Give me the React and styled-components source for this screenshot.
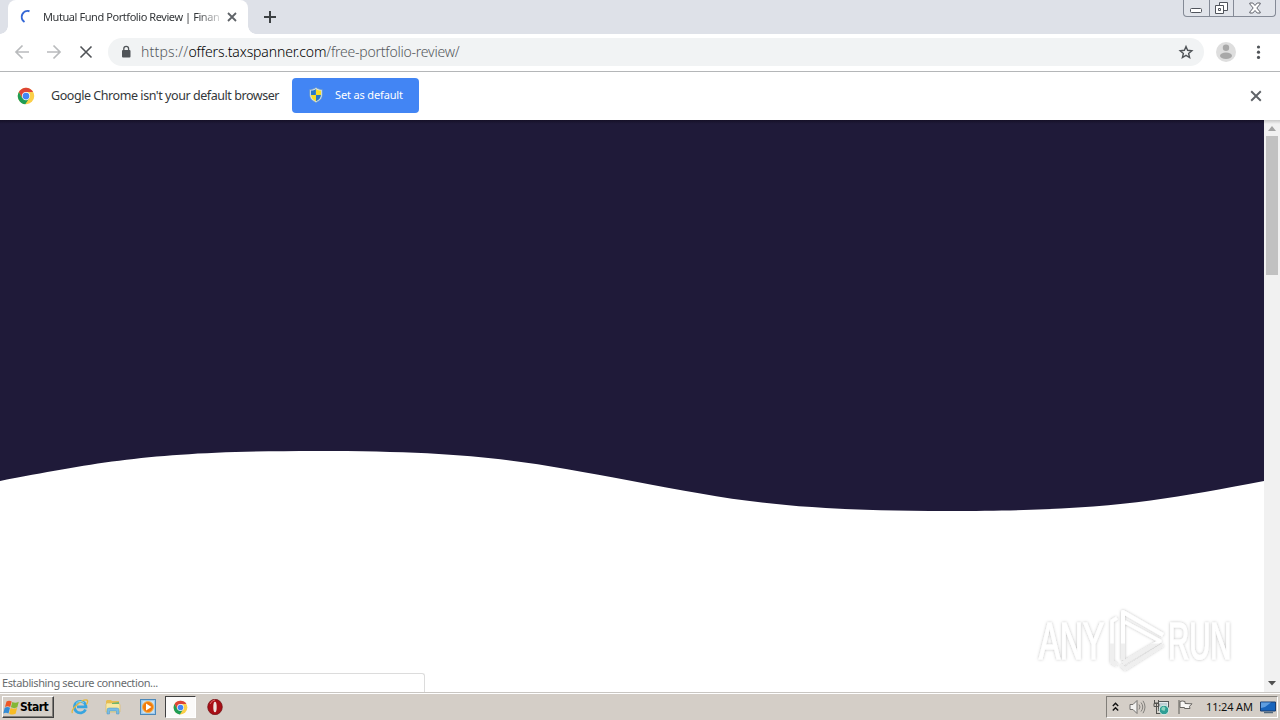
import React from 'react';
import styled, { createGlobalStyle } from 'styled-components';

const Global = createGlobalStyle`
  * { box-sizing: border-box; }
  html, body { margin: 0; padding: 0; overflow: hidden; }
  svg { display: block; flex: none; }
`;

const Desktop = styled.div`
  width: 1280px;
  height: 720px;
  display: flex;
  flex-direction: column;
  background: #fff;
  overflow: hidden;
  font-family: 'Noto Sans', 'DejaVu Sans', sans-serif;
`;

const Label = styled.span`
  display: block;
  flex: none;
  white-space: nowrap;
  font-family: ${(p) => p.$family || "'Noto Sans', sans-serif"};
  font-size: ${(p) => p.$size}px;
  font-weight: ${(p) => p.$weight || 400};
  letter-spacing: ${(p) => p.$track || 0}px;
  line-height: 16px;
  color: ${(p) => p.$color};
`;

const TabStrip = styled.header`
  height: 34px;
  flex: none;
  display: flex;
  background: #dee1e8;
  padding-left: 8px;
`;

const Tab = styled.div`
  position: relative;
  width: 240px;
  height: 34px;
  display: flex;
  align-items: center;
  padding: 0 10px 0 12px;
  background: #fff;
  border-radius: 8px 8px 0 0;
  &::before, &::after {
    content: '';
    position: absolute;
    bottom: 0;
    width: 8px;
    height: 8px;
  }
  &::before { left: -8px; background: radial-gradient(circle at 0 0, transparent 7.5px, #fff 8px); }
  &::after { right: -8px; background: radial-gradient(circle at 100% 0, transparent 7.5px, #fff 8px); }
`;

const TabTitle = styled.div`
  width: 177px;
  margin: 0 7px 0 8px;
  mask-image: linear-gradient(to right, #000 154px, transparent 182px);
`;

const NewTab = styled.div`
  margin: 10px 0 0 15px;
`;

const WindowButtons = styled.div`
  display: flex;
  width: 93px;
  height: 17px;
  margin: 0 4px 0 auto;
  border: 1px solid #848a96;
  border-top: 0;
  border-radius: 0 0 4px 4px;
  background: #e1e4ea;
`;

const WindowButton = styled.div`
  width: ${(p) => p.$width}px;
  display: flex;
  align-items: center;
  justify-content: center;
  & + & { border-left: 1px solid #848a96; }
`;

const Toolbar = styled.nav`
  height: 38px;
  flex: none;
  display: flex;
  align-items: center;
  padding: 0 14px 1px;
  border-bottom: 1px solid #b4b6b8;
  background: #fff;
`;

const NavButtons = styled.div`
  display: flex;
  gap: 16px;
  width: 94px;
`;

const AddressBar = styled.div`
  width: 1096px;
  height: 28px;
  display: flex;
  align-items: center;
  padding: 0 10px 0 12px;
  border-radius: 14px;
  background: #f1f3f4;
`;

const Url = styled.div`
  display: flex;
  flex: 1;
  margin-left: 9px;
`;

const ToolbarEnd = styled.div`
  display: flex;
  align-items: center;
  gap: 14px;
  margin-left: 12px;
`;

const InfoBar = styled.section`
  height: 48px;
  flex: none;
  display: flex;
  align-items: center;
  padding: 0 18px 1px 17px;
  background: #fff;
`;

const InfoText = styled.div`
  width: 229px;
  margin-left: 16px;
`;

const DefaultButton = styled.div`
  width: 127px;
  height: 35px;
  margin: 0 auto 0 12px;
  padding: 0 0 1px 17px;
  display: flex;
  align-items: center;
  gap: 12px;
  border-radius: 4px;
  background: #4285f4;
`;

const Viewport = styled.main`
  position: relative;
  height: 572px;
  flex: none;
  display: flex;
`;

const Page = styled.div`
  width: 1264px;
  background: #fff;
`;

const Hero = styled.div`
  height: 330px;
  background: linear-gradient(#151027, #1f1a39 4px);
`;

const Scrollbar = styled.div`
  width: 16px;
  display: flex;
  flex-direction: column;
  align-items: center;
  background: linear-gradient(#c8c8c8, #f1f1f1 4px);
`;

const ScrollThumb = styled.div`
  width: 12px;
  height: 139px;
  background: #c1c1c1;
`;

const ScrollArrow = styled.div`
  height: ${(p) => p.$height}px;
  margin-top: ${(p) => (p.$end ? 'auto' : 0)};
  display: flex;
  align-items: center;
`;

const StatusBubble = styled.div`
  position: absolute;
  left: 0;
  bottom: 0;
  width: 425px;
  height: 19px;
  padding: 1px 2px;
  border: solid #dcdcdc;
  border-width: 1px 1px 0 0;
  border-radius: 0 3px 0 0;
  background: #fff;
`;

const Watermark = styled.div`
  position: absolute;
  left: 1030px;
  top: 484px;
`;

const Taskbar = styled.footer`
  height: 28px;
  flex: none;
  display: flex;
  align-items: center;
  padding: 1px 2px 0;
  border-top: 1px solid #c9c6c2;
  box-shadow: inset 0 1px #fff;
  background: #d4cec7;
`;

const StartButton = styled.div`
  width: 52px;
  height: 22px;
  display: flex;
  align-items: center;
  border: 1px solid;
  border-color: #fff #404040 #404040 #fff;
  box-shadow: inset -1px -1px #817e79;
`;

const QuickLaunch = styled.div`
  display: flex;
  align-items: center;
  margin-left: 10px;
`;

const LaunchItem = styled.div`
  width: ${(p) => p.$width || 34}px;
  height: 22px;
  display: flex;
  align-items: center;
  justify-content: center;
  ${(p) => p.$active && `
    border: 1px solid;
    border-color: #404040 #fff #fff #404040;
    background: #fbfaf9;
  `}
`;

const Tray = styled.div`
  width: 172px;
  height: 22px;
  margin-left: auto;
  display: flex;
  align-items: center;
  padding-left: 5px;
  border: 1px solid;
  border-color: #817e79 #fff #fff #817e79;
`;

const TrayItem = styled.div`
  margin-left: ${(p) => p.$gap}px;
`;

const Clock = styled.div`
  width: 47px;
  margin-left: 12px;
`;

const Cross = ({ size = 10, w = 1.8, color = '#5f6368' }) => (
  <svg width={size} height={size} viewBox="0 0 10 10">
    <path d="M1 1l8 8M9 1l-8 8" stroke={color} strokeWidth={w} fill="none" />
  </svg>
);

const Arrow = ({ flip }) => (
  <svg width="16" height="16" viewBox="0 0 16 16">
    <path d="M15 8H2M8.500 1.500L2 8l6.500 6.500" transform={flip ? 'matrix(-1 0 0 1 16 0)' : undefined} stroke="#b9bbbd" strokeWidth="1.700" fill="none" />
  </svg>
);

const ChromeLogo = ({ size }) => (
  <svg width={size} height={size} viewBox="0 0 48 48">
    <circle cx="24" cy="24" r="22" fill="#fbcf48" />
    <path d="M24 24L14 30 5 13A22 22 0 0 1 43 13H24z" fill="#dd4437" />
    <path d="M5 13A22 22 0 0 0 22 46L33 29 24 24 14 30z" fill="#1f9d55" />
    <circle cx="24" cy="24" r="11" fill="#fff" />
    <circle cx="24" cy="24" r="9" fill="#4285f4" />
  </svg>
);

const Shield = () => (
  <svg width="14" height="16" viewBox="0 0 14 16">
    <path d="M7 .5C5 2 3 2.500.8 2.500V8c0 4 3.200 6 6.200 7.500C10 14 13.200 12 13.200 8V2.500C11 2.500 9 2 7 .5z" fill="#dbe7f1" stroke="#6d98ba" strokeWidth=".7" />
    <path d="M6.900 2v6H2V3.500C4 3.500 5.500 3 6.900 2zM7 8h5c-.2 3.500-2.500 5-5 6.200z" fill="#2879c7" />
    <path d="M7 2v6h5V3.500C10 3.500 8.500 3 7 2zM7 8H2c.2 3.500 2.500 5 5 6.200z" fill="#f7dd25" />
  </svg>
);

const WindowsFlag = () => (
  <svg width="17" height="17" viewBox="0 0 17 17">
    <path d="M3.500 2.500C5.500 1.200 7 1.500 8.700 2.600L7.200 8C5.500 7 3.800 7 2 8z" fill="#ee5726" />
    <path d="M9.300 3c2 1 4 1 6.500-.2L14.300 8.300c-2 1.100-4 1.100-6.400 0z" fill="#83b735" />
    <path d="M1.700 8.700c1.800-1 3.600-1 5.300 0l-1.500 5.700c-1.800-1-3.500-1-5.200 0z" fill="#338bd5" />
    <path d="M7.600 9c2 1 4 1 6.500 0l-1.500 5.800c-2.200 1.200-4.200 1-6.500-.1z" fill="#f8bc24" />
  </svg>
);

const Explorer = () => (
  <svg width="18" height="18" viewBox="0 0 18 18">
    <path d="M14.500 11.500A5.800 5.800 0 1 1 15 8.900H6" fill="none" stroke="#38a5df" strokeWidth="2.700" />
    <path d="M1.500 15C-1 11.500 11 1.300 15.500 2c2 .3 1 3-.2 4.500" fill="none" stroke="#e4b83c" strokeWidth="1.300" />
    <path d="M5 5.500A5.500 5.500 0 0 1 13 5" fill="none" stroke="#8bd8f4" />
  </svg>
);

const Folder = () => (
  <svg width="18" height="18" viewBox="0 0 18 18">
    <path d="M2 3l1-1h4l1 1h7v10H2z" fill="#e7bd50" />
    <path d="M3 5h12l1 2v7H2V6z" fill="#f8e9a2" stroke="#dbb859" strokeWidth=".6" />
    <path d="M8 5l7-1v2H8z" fill="#70b56e" />
    <path d="M3 16v-4q0-2 2-2h8q2 0 2 2v4h-2.500v-3h-7v3z" fill="#79bce4" stroke="#4a96c6" strokeWidth=".5" />
  </svg>
);

const Player = () => (
  <svg width="18" height="18" viewBox="0 0 18 18">
    <rect x="1.500" y="1.500" width="15" height="15" fill="#9ecaed" stroke="#4b88b9" />
    <rect x="3.500" y="3" width="11.500" height="12" fill="#c7e0f2" />
    <circle cx="9" cy="9" r="5.500" fill="#f17a0b" stroke="#f6b04a" />
    <path d="M7 5.500L12.500 9 7 12.500z" fill="#fff" />
  </svg>
);

const Opera = () => (
  <svg width="16" height="16" viewBox="0 0 16 16">
    <ellipse cx="8" cy="8" rx="7.300" ry="7.700" fill="#a80f16" stroke="#6d1114" strokeWidth=".7" />
    <ellipse cx="8" cy="8" rx="1.700" ry="5.300" fill="#eee4df" />
    <path d="M3 5Q5 1 8 1" fill="none" stroke="#df6869" />
  </svg>
);

const Chevron = () => (
  <svg width="7" height="10" viewBox="0 0 7 10">
    <path d="M.8 4L3.500 1.300 6.200 4M.8 8.500L3.500 5.800 6.200 8.500" fill="none" stroke="#111" strokeWidth="1.400" />
  </svg>
);

const Speaker = () => (
  <svg width="17" height="16" viewBox="0 0 17 16">
    <path d="M1 5.500h3L8 1.500v13L4 10.500H1z" fill="#f3f2f0" stroke="#73716e" />
    <path d="M10 5.500q2 2.500 0 5M12 3.500q3.500 4.500 0 9M14 1.800q4 6.200 0 12.400" fill="none" stroke="#82807c" />
  </svg>
);

const Network = () => (
  <svg width="17" height="17" viewBox="0 0 17 17">
    <rect x="5.500" y="2.500" width="10" height="9" fill="#e4eaec" stroke="#55595a" />
    <rect x="7" y="4" width="7" height="6" fill="#bcced4" />
    <path d="M1.500 1v3h4V1M3.500 4v10M1 4.500h5v3H1zM3 14.500h5" fill="none" stroke="#53534f" />
    <circle cx="11" cy="11" r="4.800" fill="#2e9e95" stroke="#e1eeea" />
    <path d="M8.500 9q2-3 4 0l-1 3-3-1z" fill="#8bd3bc" />
  </svg>
);

const Flag = () => (
  <svg width="17" height="16" viewBox="0 0 17 16">
    <path d="M2 1v14" stroke="#85827d" strokeWidth="1.500" />
    <path d="M3 2.500q2-1 5 0v2l7 .3-2.500 2.500L13 9.500H7.500v-1H3z" fill="#f8f7f5" stroke="#686662" />
  </svg>
);

const Monitor = () => (
  <svg width="16" height="13" viewBox="0 0 16 13">
    <path d="M.5 1h15v9H.5z" fill="#1864bc" stroke="#183c71" />
    <path d="M1 1.500h10L5 6 1 7z" fill="#5e9de0" />
    <path d="M4 11.500h9" stroke="#52687c" strokeWidth="1.500" />
  </svg>
);

const AnyRun = () => (
  <svg width="212" height="76" viewBox="0 0 212 76">
    <defs>
      <filter id="soft" x="-10%" y="-10%" width="120%" height="130%">
        <feDropShadow dx="0" dy="0" stdDeviation="1.800" floodColor="#000" floodOpacity=".27" />
      </filter>
      <linearGradient id="fade" gradientUnits="userSpaceOnUse" x1="0" y1="0" x2="0" y2="76">
        <stop offset=".51" stopColor="#fff" />
        <stop offset=".53" stopColor="#efefef" />
      </linearGradient>
    </defs>
    <g filter="url(#soft)" fill="url(#fade)">
      <g fontFamily="'Liberation Sans', sans-serif" fontSize="51" stroke="url(#fade)" strokeWidth="1.200">
        <text transform="translate(9 55) scale(.62 1)">ANY</text>
        <text transform="translate(138 55) scale(.575 1)">RUN</text>
      </g>
      <g fill="none" stroke="url(#fade)" strokeLinejoin="round">
        <path d="M87 14l-5 3V58l5 3" strokeWidth="3.500" />
        <path d="M93 56V8L133 31" strokeWidth="4" />
        <path d="M95 18L130 37 93 59" strokeWidth="3.500" />
        <path d="M91 61l4 4 38-24" strokeWidth="3" />
      </g>
    </g>
  </svg>
);

export default function App() {
  return (
    <Desktop>
      <Global />
      <TabStrip>
        <Tab>
          <svg width="15" height="16" viewBox="0 0 15 16">
            <path d="M9.500 2.200A6 6 0 0 0 4.500 13" fill="none" stroke="#3367d6" strokeWidth="2" />
          </svg>
          <TabTitle>
            <Label $size={11} $track={-0.43} $color="#34373a">Mutual Fund Portfolio Review | Finan</Label>
          </TabTitle>
          <Cross />
        </Tab>
        <NewTab>
          <svg width="14" height="14" viewBox="0 0 14 14">
            <path d="M7 1v12M1 7h12" stroke="#3c4043" strokeWidth="2" />
          </svg>
        </NewTab>
        <WindowButtons>
          <WindowButton $width={25}>
            <svg width="12" height="15" viewBox="0 0 12 15">
              <rect x=".5" y="7.500" width="11" height="4" rx="1" fill="#fff" stroke="#50545c" />
            </svg>
          </WindowButton>
          <WindowButton $width={25}>
            <svg width="13" height="14" viewBox="0 0 13 14">
              <path d="M4.500 1.500h8v8h-8z" fill="#fff" stroke="#50545c" />
              <path d="M.5 4.500h8v8h-8zM3.500 7.500h2v2h-2z" fill="#fff" stroke="#50545c" />
            </svg>
          </WindowButton>
          <WindowButton $width={42}>
            <svg width="12" height="12" viewBox="0 0 12 12">
              <path d="M.8 1h3L6 3.500 8.200 1h3v1L7.800 6l3.400 4v1h-3L6 8.500 3.800 11h-3v-1l3.400-4L.8 2z" fill="#fff" stroke="#50545c" strokeWidth=".9" />
            </svg>
          </WindowButton>
        </WindowButtons>
      </TabStrip>

      <Toolbar>
        <NavButtons>
          <Arrow />
          <Arrow flip />
          <svg width="16" height="16" viewBox="0 0 16 16">
            <path d="M2.500 2.500l11 11M13.500 2.500l-11 11" stroke="#505357" strokeWidth="1.600" />
          </svg>
        </NavButtons>
        <AddressBar>
          <svg width="12" height="14" viewBox="0 0 12 14">
            <rect x="2" y="5" width="8.500" height="7.500" rx="1" fill="#505458" />
            <path d="M3.800 5.500V3.700a2.400 2.400 0 0 1 4.800 0v1.800" fill="none" stroke="#505458" strokeWidth="1.300" />
          </svg>
          <Url>
            <Label $size={14} $weight={300} $track={0.18} $color="#55595d">https://</Label>
            <Label $size={14} $weight={300} $track={-0.12} $color="#000">offers.taxspanner.com</Label>
            <Label $size={14} $weight={300} $track={-0.23} $color="#55595d">/free-portfolio-review/</Label>
          </Url>
          <svg width="16" height="16" viewBox="0 0 16 16">
            <path d="M8 2.500l1.600 3.800 4.200.4-3.200 2.700 1 4.100L8 11.400l-3.600 2.100 1-4.100L2.200 6.700l4.200-.4z" fill="none" stroke="#505458" strokeWidth="1.400" />
          </svg>
        </AddressBar>
        <ToolbarEnd>
          <svg width="20" height="20" viewBox="0 0 20 20">
            <circle cx="10" cy="10" r="10" fill="#dedede" />
            <circle cx="10" cy="5.800" r="3.200" fill="#a8a8a8" />
            <ellipse cx="10" cy="13.700" rx="6" ry="3.200" fill="#a8a8a8" />
          </svg>
          <svg width="16" height="16" viewBox="0 0 16 16" fill="#505458">
            <circle cx="8.500" cy="3" r="1.600" />
            <circle cx="8.500" cy="8.200" r="1.600" />
            <circle cx="8.500" cy="13.400" r="1.600" />
          </svg>
        </ToolbarEnd>
      </Toolbar>

      <InfoBar>
        <ChromeLogo size={18} />
        <InfoText>
          <Label $size={12.5} $track={-0.44} $color="#34373a">Google Chrome isn't your default browser</Label>
        </InfoText>
        <DefaultButton>
          <Shield />
          <Label $size={11} $track={-0.15} $color="#fff">Set as default</Label>
        </DefaultButton>
        <Cross size={12} w={1.6} />
      </InfoBar>

      <Viewport>
        <Page>
          <Hero />
          <svg width="1264" height="62" viewBox="0 0 1264 62">
            <path d="M0 0H1264V31C1159 51 1106 61 948 61S737 51 632 31S474 1 316 1S105 11 0 31z" fill="#1f1a39" />
          </svg>
        </Page>
        <Scrollbar>
          <ScrollArrow $height={16}>
            <svg width="8" height="5" viewBox="0 0 8 5"><path d="M0 5l4-5 4 5z" fill="#a3a3a3" /></svg>
          </ScrollArrow>
          <ScrollThumb />
          <ScrollArrow $height={18} $end>
            <svg width="8" height="5" viewBox="0 0 8 5"><path d="M0 0h8L4 4.500z" fill="#505050" /></svg>
          </ScrollArrow>
        </Scrollbar>
        <Watermark><AnyRun /></Watermark>
        <StatusBubble>
          <Label $size={11} $track={-0.38} $color="#686b6e">Establishing secure connection...</Label>
        </StatusBubble>
      </Viewport>

      <Taskbar>
        <StartButton>
          <WindowsFlag />
          <Label $family="'DejaVu Sans Condensed', 'DejaVu Sans', sans-serif" $size={12} $weight={700} $track={-0.5} $color="#000">Start</Label>
        </StartButton>
        <QuickLaunch>
          <LaunchItem $width={31}><Explorer /></LaunchItem>
          <LaunchItem $width={36}><Folder /></LaunchItem>
          <LaunchItem $width={34}><Player /></LaunchItem>
          <LaunchItem $width={31} $active><ChromeLogo size={15} /></LaunchItem>
          <LaunchItem $width={37}><Opera /></LaunchItem>
        </QuickLaunch>
        <Tray>
          <TrayItem $gap={0}><Chevron /></TrayItem>
          <TrayItem $gap={10}><Speaker /></TrayItem>
          <TrayItem $gap={7}><Network /></TrayItem>
          <TrayItem $gap={7}><Flag /></TrayItem>
          <Clock>
            <Label $size={11} $track={-0.15} $color="#111">11:24 AM</Label>
          </Clock>
          <TrayItem $gap={7}><Monitor /></TrayItem>
        </Tray>
      </Taskbar>
    </Desktop>
  );
}
